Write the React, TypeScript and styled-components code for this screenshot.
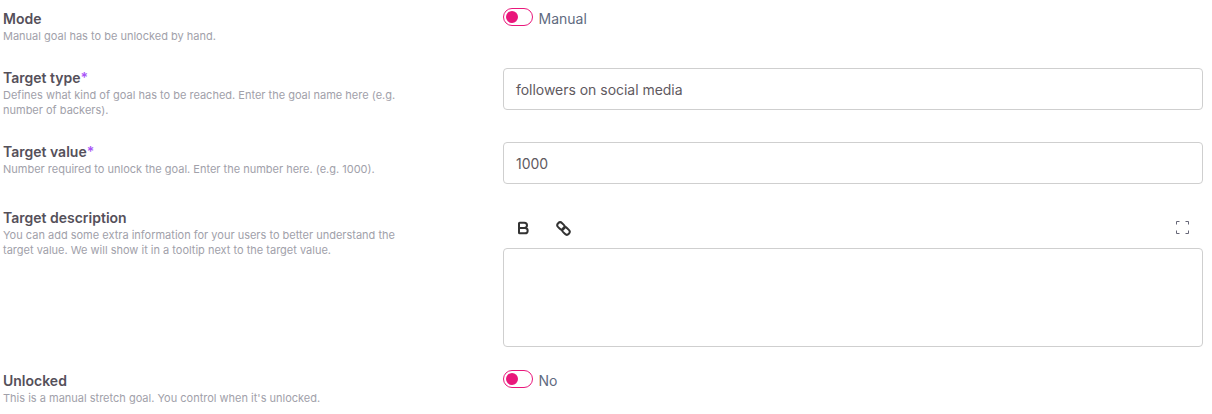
import React from "react";
import styled, { createGlobalStyle } from "styled-components";
import { Bold } from "lucide-react";

const Global = createGlobalStyle`
  html, body { margin: 0; padding: 0; background: #fff; }
  body { font-family: Inter, "Liberation Sans", sans-serif; overflow: hidden; }
`;

const Page = styled.div`
  display: flex;
  flex-direction: column;
  gap: 24px;
  padding: 9px 9px 0 3px;
  height: 414px;
  box-sizing: border-box;
`;

const Row = styled.div`
  display: grid;
  grid-template-columns: 500px 700px;
`;

const Info = styled.div`
  max-width: 400px;
`;

const Label = styled.div`
  font-size: 14px;
  line-height: 20px;
  font-weight: 600;
  color: #55505a;
`;

const Star = styled.span`
  color: #a855f7;
`;

const Help = styled.div`
  font-size: 11px;
  line-height: 15px;
  color: #a1a1aa;
`;

const ToggleRow = styled.div`
  display: flex;
  align-items: center;
  gap: 5.5px;
  margin-top: -1px;
  height: 18px;
`;

const Track = styled.span`
  display: flex;
  align-items: center;
  width: 30px;
  height: 18px;
  box-sizing: border-box;
  padding-left: 1.5px;
  border: 1px solid #e9177b;
  border-radius: 9px;
  background: #fff;
`;

const Knob = styled.span`
  width: 12.5px;
  height: 12.5px;
  border-radius: 50%;
  background: #e9177b;
`;

const ToggleText = styled.span`
  font-size: 14px;
  line-height: 20px;
  color: #5f6b7f;
  position: relative;
  top: 1.5px;
`;

const Input = styled.div`
  height: 42px;
  box-sizing: border-box;
  display: flex;
  align-items: center;
  padding: 0 12px;
  border: 1px solid #cfcfcf;
  border-radius: 4px;
  font-size: 14px;
  letter-spacing: -0.03px;
  color: #5f5a5f;
`;

const Toolbar = styled.div`
  display: flex;
  align-items: center;
  height: 40px;
`;

const ToolButton = styled.button`
  width: 40px;
  height: 40px;
  padding: 0;
  display: flex;
  align-items: center;
  justify-content: center;
  border: 0;
  background: none;
  color: #333;
`;

const ExpandIcon = styled.svg`
  margin-right: 1px;
  margin-bottom: 1px;
`;

const Spacer = styled.div`
  flex: 1;
`;

const Editor = styled.div`
  height: 99px;
  box-sizing: border-box;
  border: 1px solid #cfcfcf;
  border-radius: 4px;
`;

const Field = ({ label, required, help }: { label: string; required?: boolean; help: React.ReactNode }) => (
  <Info>
    <Label>
      {label}
      {required && <Star>*</Star>}
    </Label>
    <Help>{help}</Help>
  </Info>
);

const Toggle = ({ text }: { text: string }) => (
  <ToggleRow>
    <Track>
      <Knob />
    </Track>
    <ToggleText>{text}</ToggleText>
  </ToggleRow>
);

export default function App() {
  return (
    <Page>
      <Global />
      <Row>
        <Field label="Mode" help="Manual goal has to be unlocked by hand." />
        <Toggle text="Manual" />
      </Row>
      <Row>
        <Field
          label="Target type"
          required
          help="Defines what kind of goal has to be reached. Enter the goal name here (e.g. number of backers)."
        />
        <Input>followers on social media</Input>
      </Row>
      <Row>
        <Field label="Target value" required help="Number required to unlock the goal. Enter the number here. (e.g. 1000)." />
        <Input>1000</Input>
      </Row>
      <Row>
        <Field
          label="Target description"
          help="You can add some extra information for your users to better understand the target value. We will show it in a tooltip next to the target value."
        />
        <div>
          <Toolbar>
            <ToolButton>
              <Bold size={16} strokeWidth={3} />
            </ToolButton>
            <ToolButton>
              <svg width="15" height="15" viewBox="0 0 15 15" fill="none" stroke="#333" strokeWidth="2">
                <rect x="1" y="2.2" width="8" height="5.6" rx="2.8" transform="rotate(45 5 5)" />
                <rect x="6" y="7.2" width="8" height="5.6" rx="2.8" transform="rotate(45 10 10)" />
              </svg>
            </ToolButton>
            <Spacer />
            <ToolButton>
              <ExpandIcon width="13" height="13" viewBox="0 0 13 13" fill="none" stroke="#667" strokeWidth="1">
                <path d="M0.5 3.5V0.5H3.5M9.5 0.5H12.5V3.5M12.5 9.5V12.5H9.5M3.5 12.5H0.5V9.5" />
              </ExpandIcon>
            </ToolButton>
          </Toolbar>
          <Editor />
        </div>
      </Row>
      <Row>
        <Field label="Unlocked" help="This is a manual stretch goal. You control when it's unlocked." />
        <Toggle text="No" />
      </Row>
    </Page>
  );
}
